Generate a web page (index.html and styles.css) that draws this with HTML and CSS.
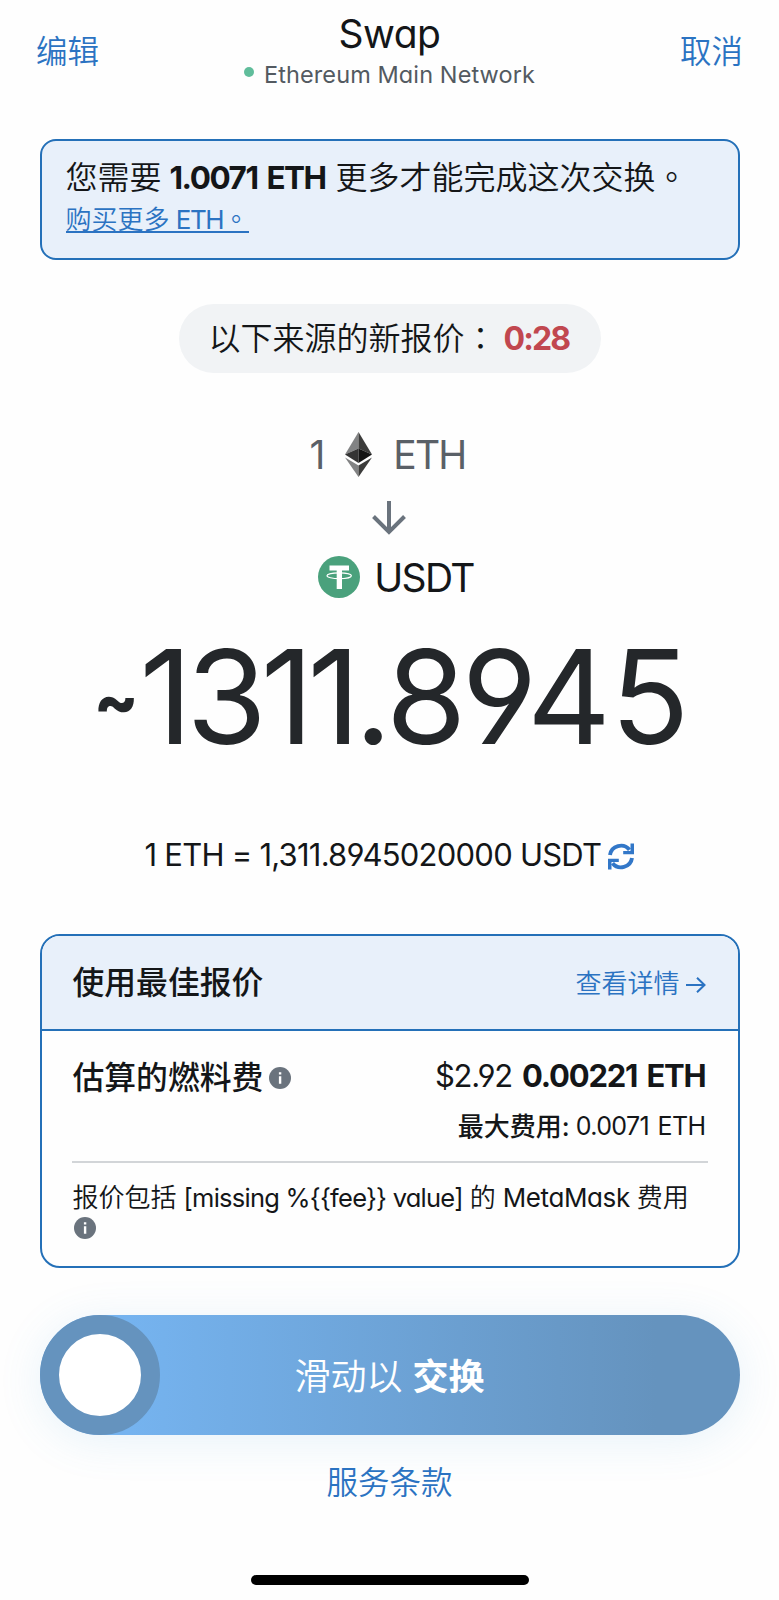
FILE: index.html
```html
<!DOCTYPE html>
<html lang="zh-CN">
<head>
<meta charset="utf-8">
<title>Swap</title>
<link rel="stylesheet" href="styles.css">
</head>
<body>
<main class="screen">
  <header class="nav">
    <a class="nav-link">编辑</a>
    <div class="nav-title">
      <h1 class="title">Swap</h1>
      <div class="network"><i class="dot"></i><span>Ethereum Main Network</span></div>
    </div>
    <a class="nav-link">取消</a>
  </header>

  <section class="alert">
    <p class="alert-text">您需要 <b class="need">1.0071 ETH</b> 更多才能完成这次交换<span class="tc" lang="zh-TW">。</span></p>
    <a class="buy">购买更多 <span class="buy-eth">ETH</span><span class="tc" lang="zh-TW">。</span></a>
  </section>

  <div class="timer"><span class="timer-text">以下来源的新报价<span class="tc" lang="zh-TW">：</span></span><b class="count">0:28</b></div>

  <div class="from">
    <span>1</span>
    <svg class="eth" viewBox="0 0 27 45">
      <path fill="#828384" d="M13.5 0 0 22.5 13.5 16.5z"/>
      <path fill="#3c3c3b" d="M13.5 0 27 22.5 13.5 16.5z"/>
      <path fill="#343434" d="M0 22.5 13.5 16.5V31z"/>
      <path fill="#141414" d="M27 22.5 13.5 16.5V31z"/>
      <path fill="#828384" d="M0 25.5 13.5 33.5V45z"/>
      <path fill="#3c3c3b" d="M27 25.5 13.5 33.5V45z"/>
    </svg>
    <span class="from-name">ETH</span>
  </div>
  <svg class="down" viewBox="0 0 34 34"><path d="M17 0V31M1.5 15.5 17 31 32.5 15.5"/></svg>
  <div class="to">
    <svg class="usdt" viewBox="0 0 42 42">
      <circle cx="21" cy="21" r="21" fill="#4aa17c"/>
      <path fill="#fff" d="M11.5 9.5h19.500v5h-7V33h-5.300V14.500h-7.200z"/>
      <ellipse cx="21.200" cy="19.700" rx="12.200" ry="2.900" fill="none" stroke="#fff" stroke-width="1.200"/>
    </svg>
    <span>USDT</span>
  </div>

  <div class="amount"><span class="tilde">~</span><span class="value"><span class="whole">1311.</span>894<span class="last">5</span></span></div>

  <div class="rate">
    <span class="rate-text">1 ETH = 1,311.8945020000 USDT</span>
    <svg class="refresh" viewBox="0 0 26 27">
      <path class="ring" d="M2 12A11 10.800 0 0 1 21.500 6.800M24 15A11 10.800 0 0 1 4.500 20.200"/>
      <path class="head" d="M26 .5V11.200H15.200V7.900H22.500V.5zM0 26.500V15.800H10.800V19.100H3.500V26.500z"/>
    </svg>
  </div>

  <section class="card">
    <div class="card-head">
      <h2 class="card-title">使用最佳报价</h2>
      <a class="details">查看详情<svg class="arrow" viewBox="0 0 20 16"><path d="M0 8H18.500M11 .8 18.500 8 11 15.200"/></svg></a>
    </div>
    <div class="card-body">
      <div class="fee">
        <div class="fee-label">估算的燃料费<svg class="info" viewBox="0 0 22 22"><circle cx="11" cy="11" r="11"/><path d="M9.900 5.200h2.400v2.400H9.900zM9.900 9.200h2.400v7.600H9.900z"/></svg></div>
        <div class="fee-value"><span class="usd">$2.92</span><b class="fee-eth">0.00221 ETH</b></div>
      </div>
      <div class="max"><b class="max-label">最大费用:</b><span class="max-eth">0.0071 ETH</span></div>
      <div class="note">
        <div class="note-text"><span>报价包括</span><span class="missing">[missing %{{fee}} value]</span><span>的</span><span class="mm">MetaMask</span><span>费用</span></div>
        <svg class="info" viewBox="0 0 22 22"><circle cx="11" cy="11" r="11"/><path d="M9.900 5.200h2.400v2.400H9.900zM9.900 9.200h2.400v7.600H9.900z"/></svg>
      </div>
    </div>
  </section>

  <div class="slider">
    <div class="knob"></div>
    <div class="slider-text">滑动以 <b>交换</b></div>
  </div>
  <a class="terms">服务条款</a>
  <div class="home"></div>
</main>
</body>
</html>
```
FILE: styles.css
```css
* { box-sizing: border-box; margin: 0; padding: 0; }
body { background: #fefefe; }
svg { display: block; flex: none; }

.screen {
  width: 779px;
  height: 1600px;
  display: flex;
  flex-direction: column;
  align-items: center;
  overflow: hidden;
  color: #141618;
  font-family: Inter, "Noto Sans CJK SC", sans-serif;
  font-feature-settings: "cv04", "cv11";
  font-size: 32px;
  font-weight: 350;
  white-space: nowrap;
}
.tc { font-family: "Noto Sans CJK TC", sans-serif; }

.nav {
  width: 100%;
  height: 139px;
  padding: 0 36px;
  display: flex;
  justify-content: space-between;
  align-items: flex-start;
}
.nav-link { margin-top: 32px; line-height: 40px; font-size: 31.500px; color: #2b73c2; }
.nav-title { display: flex; flex-direction: column; align-items: center; padding-top: 12px; }
.title { font-size: 39px; font-weight: 400; line-height: 44px; letter-spacing: -.5px; }
.network {
  display: flex;
  align-items: flex-start;
  gap: 10px;
  line-height: 37px;
  font-size: 23.500px;
  font-weight: 400;
  letter-spacing: .100px;
  color: #535a61;
}
.dot { width: 10px; height: 10px; margin-top: 11px; border-radius: 50%; background: #60bd9b; }

.alert {
  width: 700px;
  height: 121px;
  padding: 14px 24px 0;
  border: 2px solid #2470b8;
  border-radius: 16px;
  background: #e8f0fa;
}
.alert-text { height: 43px; line-height: 40px; font-size: 32px; }
.need {
  display: inline-block;
  width: 157px;
  margin-left: -1px;
  font-size: 31.500px;
  letter-spacing: -1.500px;
  word-spacing: 3px;
}
.buy {
  display: inline-block;
  height: 34px;
  line-height: 38px;
  font-size: 26px;
  color: #2b73c2;
  border-bottom: 2px solid #2b73c2;
  margin-top: 1px;
}
.buy-eth { margin: 0 0 0 -1px; font-weight: 400; letter-spacing: -1.500px; }

.timer {
  width: 422px;
  height: 69px;
  margin-top: 44px;
  padding-left: 30px;
  display: flex;
  align-items: center;
  gap: 7px;
  border-radius: 35px;
  background: #f1f3f5;
}
.timer-text { line-height: 40px; margin-bottom: 3px; }
.count { color: #c1474f; font-size: 32px; letter-spacing: -1.900px; }

.from {
  height: 45px;
  margin: 59px 4px 0 0;
  display: flex;
  align-items: center;
  color: #5a6067;
  font-size: 39px;
  font-weight: 400;
}
.eth { width: 27px; height: 45px; margin: 0 21px 0 20px; }
.from-name { letter-spacing: -1.800px; }
.down { width: 34px; height: 34px; margin: 24px 1px 0 0; fill: none; stroke: #6a737d; stroke-width: 4; }
.to {
  height: 42px;
  margin: 21px 0 0 13px;
  display: flex;
  align-items: center;
  gap: 14px;
  font-size: 39px;
  font-weight: 400;
  letter-spacing: -1.700px;
}
.usdt { width: 42px; height: 42px; }

.amount {
  width: 588px;
  height: 160px;
  margin-top: 18px;
  display: flex;
  color: #24272a;
  line-height: 160px;
}
.tilde { width: 45px; margin-left: -2px; font-size: 66px; font-weight: 800; line-height: 168px; }
.value { padding-left: 1px; font-size: 130px; font-weight: 400; letter-spacing: -4.600px; line-height: 162px; }
.whole { letter-spacing: -6px; }
.last { margin-left: 4px; }

.rate {
  width: 490px;
  height: 40px;
  margin-top: 60px;
  display: flex;
  align-items: center;
  justify-content: space-between;
}
.rate-text { margin-bottom: 3px; font-size: 31px; font-weight: 400; letter-spacing: -.760px; }
.refresh { width: 26px; height: 27px; margin-right: 1px; }
.ring { fill: none; stroke: #3277c8; stroke-width: 3.900; }
.head { fill: #3277c8; }

.card {
  width: 700px;
  height: 334px;
  margin-top: 58px;
  border: 2px solid #2470b8;
  border-radius: 20px;
  overflow: hidden;
}
.card-head {
  height: 95px;
  padding: 0 32px 0 31px;
  display: flex;
  align-items: center;
  justify-content: space-between;
  background: #e8f0fa;
  border-bottom: 2px solid #2470b8;
}
.card-title { font-size: 31.800px; font-weight: 500; margin-bottom: 5px; }
.details { display: flex; align-items: center; gap: 6px; margin-bottom: 2px; font-size: 26px; color: #2b73c2; }
.arrow { width: 20px; height: 16px; margin-top: 6px; fill: none; stroke: #2b73c2; stroke-width: 2; }
.card-body { padding: 25px 30px 0; }
.fee { height: 44px; display: flex; align-items: center; justify-content: space-between; }
.fee-label { display: flex; align-items: center; gap: 6px; padding-left: 1px; font-size: 31.800px; font-weight: 500; line-height: 44px; }
.fee-value { display: flex; gap: 10px; padding-right: 2px; font-size: 31px; line-height: 40px; margin-top: -4px; }
.usd { font-weight: 400; letter-spacing: -1.200px; }
.fee-eth { letter-spacing: -1.200px; word-spacing: 3px; }
.info { width: 22px; height: 22px; }
.info circle { fill: #6a737d; }
.info path { fill: #fff; }
.max {
  height: 63px;
  padding: 8px 2px 0 0;
  display: flex;
  justify-content: flex-end;
  gap: 6px;
  line-height: 36px;
  font-size: 26px;
  border-bottom: 2px solid #d2d5d8;
}
.max-label { font-weight: 500; line-height: 38px; }
.max-eth { font-size: 25px; font-weight: 400; letter-spacing: -.600px; word-spacing: 2px; }
.note { padding-top: 16px; }
.note-text { display: flex; gap: 7px; padding-left: 1px; line-height: 38px; font-size: 26px; }
.missing { font-size: 25.500px; font-weight: 400; letter-spacing: -.750px; }
.mm { font-weight: 400; letter-spacing: -.400px; }
.note .info { margin: 0 0 0 2px; }

.slider {
  width: 700px;
  height: 120px;
  margin-top: 47px;
  flex: none;
  display: grid;
  align-items: center;
  border-radius: 60px;
  background: linear-gradient(90deg, #75b3ef 13%, #6593be 88%);
  box-shadow: 0 6px 44px rgba(80, 160, 220, .13);
}
.knob, .slider-text { grid-area: 1 / 1; }
.knob { width: 120px; height: 120px; border: 19px solid #6593be; border-radius: 50%; background: #fff; }
.slider-text { justify-self: center; margin-top: 3px; color: #fff; font-size: 36px; line-height: 50px; }
.terms { margin-top: 28px; line-height: 40px; font-size: 31.500px; color: #2b73c2; }
.home { width: 278px; height: 10px; margin-top: 72px; border-radius: 5px; background: #000; flex: none; }
```
